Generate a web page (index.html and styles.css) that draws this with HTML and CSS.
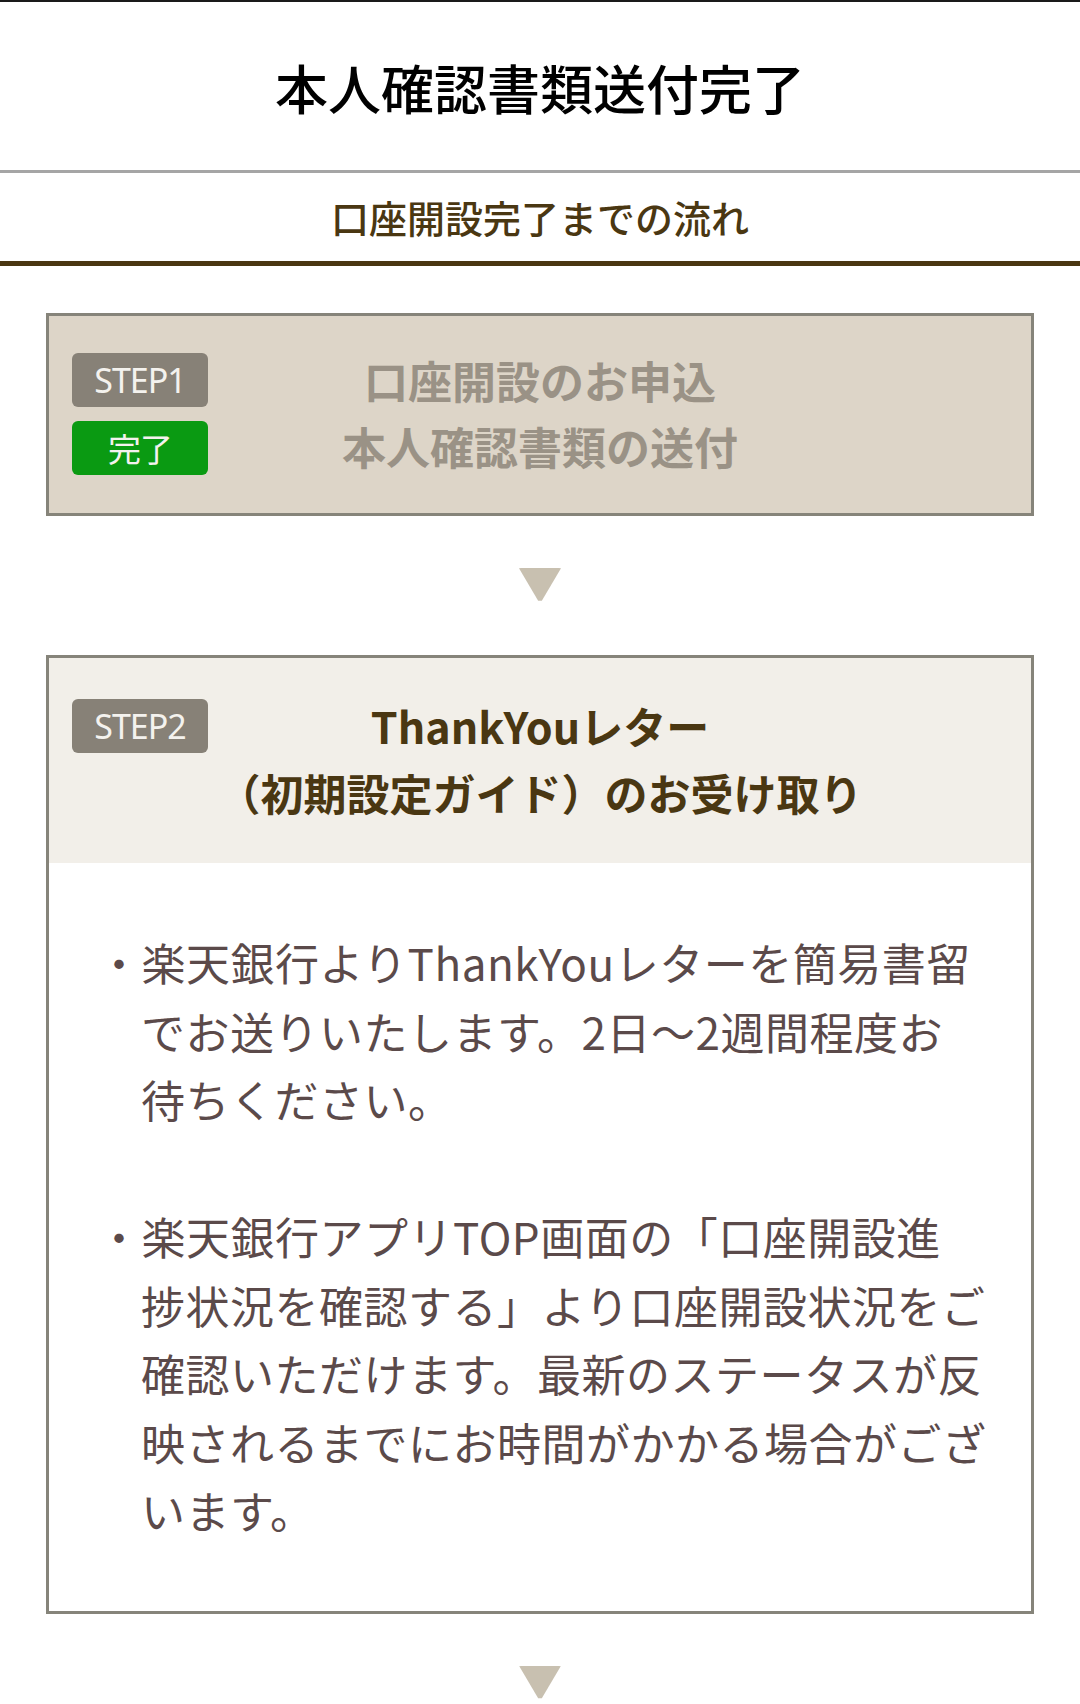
FILE: index.html
```html
<!DOCTYPE html>
<html lang="ja">
	<head>
		<meta charset="utf-8">
		<title>本人確認書類送付完了</title>
		<link rel="stylesheet" href="styles.css">
	</head>
	<body>
		<div class="page">
			<header class="pageHead">
				<h1>本人確認書類送付完了</h1>
			</header>
			<div class="flowHead">
				<h2>口座開設完了までの流れ</h2>
			</div>

			<div class="flow">
				<div class="step step-done">
					<div class="stepHead">
						<div class="badges">
							<span class="badge">STEP1</span>
							<span class="badge badge-done">完了</span>
						</div>
						<p class="stepTitle">口座開設のお申込<br>本人確認書類の送付</p>
					</div>
				</div>

				<div class="arrow"></div>

				<div class="step">
					<div class="stepHead">
						<div class="badges">
							<span class="badge">STEP2</span>
						</div>
						<p class="stepTitle">ThankYouレター<br>（初期設定ガイド）のお受け取り</p>
					</div>
					<div class="stepBody">
						<p>・楽天銀行よりThankYouレターを簡易書留<br>でお送りいたします。2日〜2週間程度お<br>待ちください。</p>
						<p>・楽天銀行アプリTOP画面の「口座開設進<br>捗状況を確認する」より口座開設状況をご<br>確認いただけます。最新のステータスが反<br>映されるまでにお時間がかかる場合がござ<br>います。</p>
					</div>
				</div>

				<div class="arrow"></div>
			</div>
		</div>
	</body>
</html>
```

FILE: styles.css
```css
* {
	margin: 0;
	padding: 0;
	box-sizing: border-box;
}

body {
	background: #fff;
	font-family: "Noto Sans CJK JP", "Noto Sans", sans-serif;
	color: #5b4a4a;
}

.page {
	width: 1080px;
	border-top: 2px solid #1a1a1a;
}

.pageHead {
	height: 171px;
	display: flex;
	align-items: center;
	justify-content: center;
	border-bottom: 3px solid #a5a5a5;
}

.pageHead h1 {
	font-size: 53px;
	font-weight: 500;
	color: #000;
	line-height: 1;
	padding-top: 2px;
}

.flowHead {
	height: 93px;
	display: flex;
	align-items: center;
	justify-content: center;
	border-bottom: 5px solid #4a3712;
}

.flowHead h2 {
	font-size: 38px;
	font-weight: 500;
	color: #4a3712;
	line-height: 1;
}

.flow {
	padding: 47px 46px 0;
}

.step {
	border: 3px solid #86847a;
}

.stepHead {
	display: grid;
	grid-template-columns: 136px 1fr 136px;
	padding: 41px 23px 37px;
	background: #f2efe9;
}

.step-done .stepHead {
	background: #ddd5c8;
	padding-top: 37px;
	padding-bottom: 34px;
}

.badges {
	display: flex;
	flex-direction: column;
	gap: 14px;
}

.badge {
	display: block;
	height: 54px;
	line-height: 54px;
	border-radius: 6px;
	background: #878177;
	color: #f4f2ee;
	font-size: 34px;
	text-align: center;
	font-family: "Noto Sans", sans-serif;
	letter-spacing: -1px;
}

.badge-done {
	background: #0a9a12;
	font-family: "Noto Sans CJK JP", sans-serif;
	font-size: 33px;
}

.stepTitle {
	text-align: center;
	font-size: 43px;
	font-weight: 700;
	line-height: 67px;
	color: #4a3712;
	margin-top: -7px;
	white-space: nowrap;
}

.step-done .stepTitle {
	color: #9a9286;
	font-size: 44px;
	line-height: 66px;
	margin-top: -6px;
}

.stepBody {
	background: #fff;
	padding: 65px 40px 66px 48px;
}

.stepBody p {
	font-size: 44px;
	line-height: 68.5px;
	text-indent: -44px;
	padding-left: 44px;
	white-space: nowrap;
	letter-spacing: 0.5px;
}

.stepBody p + p {
	margin-top: 68.5px;
}

.arrow {
	width: 46px;
	height: 34px;
	margin: 52px auto 53px;
	background: #c8c0b0;
	clip-path: polygon(4% 0, 96% 0, 54% 96%, 46% 96%);
	border-radius: 4px;
}
```
